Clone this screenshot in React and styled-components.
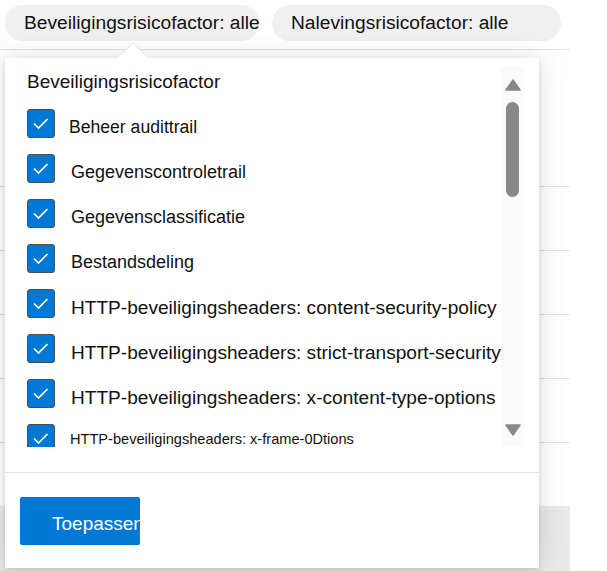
import styled, { createGlobalStyle } from 'styled-components'

const GlobalStyle = createGlobalStyle`
    body {
        margin: 0;
        background: #ffffff;
        font-family: "Liberation Sans", Arial, sans-serif;
        color: #111;
    }
`

const Page = styled.div`
    position: relative;
    width: 570px;
    height: 571px;
    overflow: hidden;
`

const FilterBar = styled.div`
    display: flex;
    gap: 13px;
    height: 50px;
    box-sizing: border-box;
    padding: 5px 0 0 5px;
    border-bottom: 1px solid #e3e3e3;
`

const Pill = styled.div`
    width: ${p => p.$width}px;
    height: 36px;
    box-sizing: border-box;
    padding: 0 0 0 19px;
    border-radius: 18px;
    background: #f0f0f0;
    font-size: 19.2px;
    line-height: 36px;
    white-space: nowrap;
`

const HeadArea = styled.div`
    height: 137px;
    box-sizing: border-box;
    border-bottom: 1px solid #e3e3e3;
`

const TableRow = styled.div`
    height: ${p => (p.$last ? 63 : 64)}px;
    box-sizing: border-box;
    border-bottom: ${p => (p.$last ? 'none' : '1px solid #e3e3e3')};
`

const GrayFooter = styled.div`
    height: 65px;
    background: #e9e9e9;
`

const Marker = styled.div`
    position: absolute;
    left: 600px;
    top: 226px;
    width: 6px;
    height: 18px;
    background: #ffe600;
`

const Caret = styled.svg`
    position: absolute;
    left: 116px;
    top: 42px;
    z-index: 3;
`

const Popup = styled.div`
    position: absolute;
    left: 5px;
    top: 58px;
    width: 534px;
    display: flex;
    flex-direction: column;
    background: #fff;
    box-shadow: 0 0 28px rgba(0, 0, 0, 0.13), 0 2px 5px rgba(0, 0, 0, 0.12);
    z-index: 2;
`

const Body = styled.div`
    display: flex;
    height: 380px;
    margin-top: 9px;
`

const List = styled.div`
    flex: 1;
    overflow: hidden;
    padding: 5px 0 0 22px;
`

const ListTitle = styled.div`
    font-size: 19px;
    line-height: 20px;
    margin-bottom: 17px;
    white-space: nowrap;
`

const Row = styled.div`
    display: flex;
    align-items: center;
    gap: ${p => p.$gap}px;
    height: 29px;
    margin-bottom: 16px;
`

const Box = styled.div`
    flex: none;
    width: 28px;
    height: 29px;
    box-sizing: border-box;
    border: 1px solid #4d4d4d;
    border-radius: 3px;
    background: #0078d4;
    display: flex;
    align-items: center;
    justify-content: center;
`

const Label = styled.span`
    font-size: ${p => p.$size}px;
    line-height: 1.15;
    padding-top: ${p => p.$drop}px;
    white-space: nowrap;
    color: #111;
`

const Scrollbar = styled.div`
    flex: none;
    width: 23px;
    margin-right: 15px;
    background: #fafafa;
    display: flex;
    flex-direction: column;
    align-items: center;
`

const Thumb = styled.div`
    width: 13px;
    height: 95px;
    margin-top: 11px;
    border-radius: 7px;
    background: #888;
`

const Spacer = styled.div`
    flex: 1;
`

const Divider = styled.div`
    height: 1px;
    margin-top: 25px;
    background: #e1e1e1;
`

const Footer = styled.div`
    padding: 24px 15px 23px;
`

const ApplyButton = styled.button`
    display: block;
    width: 120px;
    height: 48px;
    padding: 6px 0 0 32px;
    border: none;
    border-radius: 2px;
    background: #0078d4;
    color: #fff;
    font-family: "Liberation Sans", Arial, sans-serif;
    font-size: 19px;
    text-align: left;
    white-space: nowrap;
    overflow: hidden;
`

const Check = () => (
    <svg width="26" height="27" viewBox="0 0 26 27">
        <polyline points="6,13.5 10.5,18 19.5,9" fill="none" stroke="#fff" strokeWidth="1.7" />
    </svg>
)

const Arrow = ({ up }) => (
    <svg width="16" height="12" viewBox="0 0 16 12" style={{ marginTop: up ? 12 : 0, marginBottom: up ? 0 : 11 }}>
        <polygon points={up ? '8,1 15,11 1,11' : '1,1 15,1 8,11'} fill="#888" strokeLinejoin="round" stroke="#888" strokeWidth="1.5" />
    </svg>
)

const items = [
    { text: 'Beheer audittrail', size: 17.6, gap: 14, drop: 8 },
    { text: 'Gegevenscontroletrail', size: 18, gap: 16, drop: 8 },
    { text: 'Gegevensclassificatie', size: 18, gap: 16, drop: 8 },
    { text: 'Bestandsdeling', size: 18, gap: 16, drop: 8 },
    { text: 'HTTP-beveiligingsheaders: content-security-policy', size: 19.1, gap: 16, drop: 8 },
    { text: 'HTTP-beveiligingsheaders: strict-transport-security', size: 19.1, gap: 16, drop: 8 },
    { text: 'HTTP-beveiligingsheaders: x-content-type-options', size: 19.1, gap: 16, drop: 8 },
    { text: 'HTTP-beveiligingsheaders: x-frame-0Dtions', size: 14.6, gap: 15, drop: 2 },
]

const App = () => {
    return (
        <Page>
            <GlobalStyle />
            <FilterBar>
                <Pill $width={254}>Beveiligingsrisicofactor: alle</Pill>
                <Pill $width={289}>Nalevingsrisicofactor: alle</Pill>
            </FilterBar>
            <HeadArea />
            <TableRow />
            <TableRow />
            <TableRow />
            <TableRow />
            <TableRow $last />
            <GrayFooter />

            <Caret width="34" height="18" viewBox="0 0 34 18">
                <polygon points="0,17 17,1 34,17" fill="#fff" />
                <polyline points="0,17 17,1 34,17" fill="none" stroke="#e4e4e4" strokeWidth="1" />
                <rect x="0" y="16" width="34" height="2" fill="#fff" />
            </Caret>

            <Popup>
                <Body>
                    <List>
                        <ListTitle>Beveiligingsrisicofactor</ListTitle>
                        {items.map(item => (
                            <Row key={item.text} $gap={item.gap}>
                                <Box><Check /></Box>
                                <Label $size={item.size} $drop={item.drop}>{item.text}</Label>
                            </Row>
                        ))}
                    </List>
                    <Scrollbar>
                        <Arrow up />
                        <Thumb />
                        <Spacer />
                        <Arrow />
                    </Scrollbar>
                </Body>
                <Divider />
                <Footer>
                    <ApplyButton>Toepassen</ApplyButton>
                </Footer>
            </Popup>
            <Marker />
        </Page>
    )
}

export default App
